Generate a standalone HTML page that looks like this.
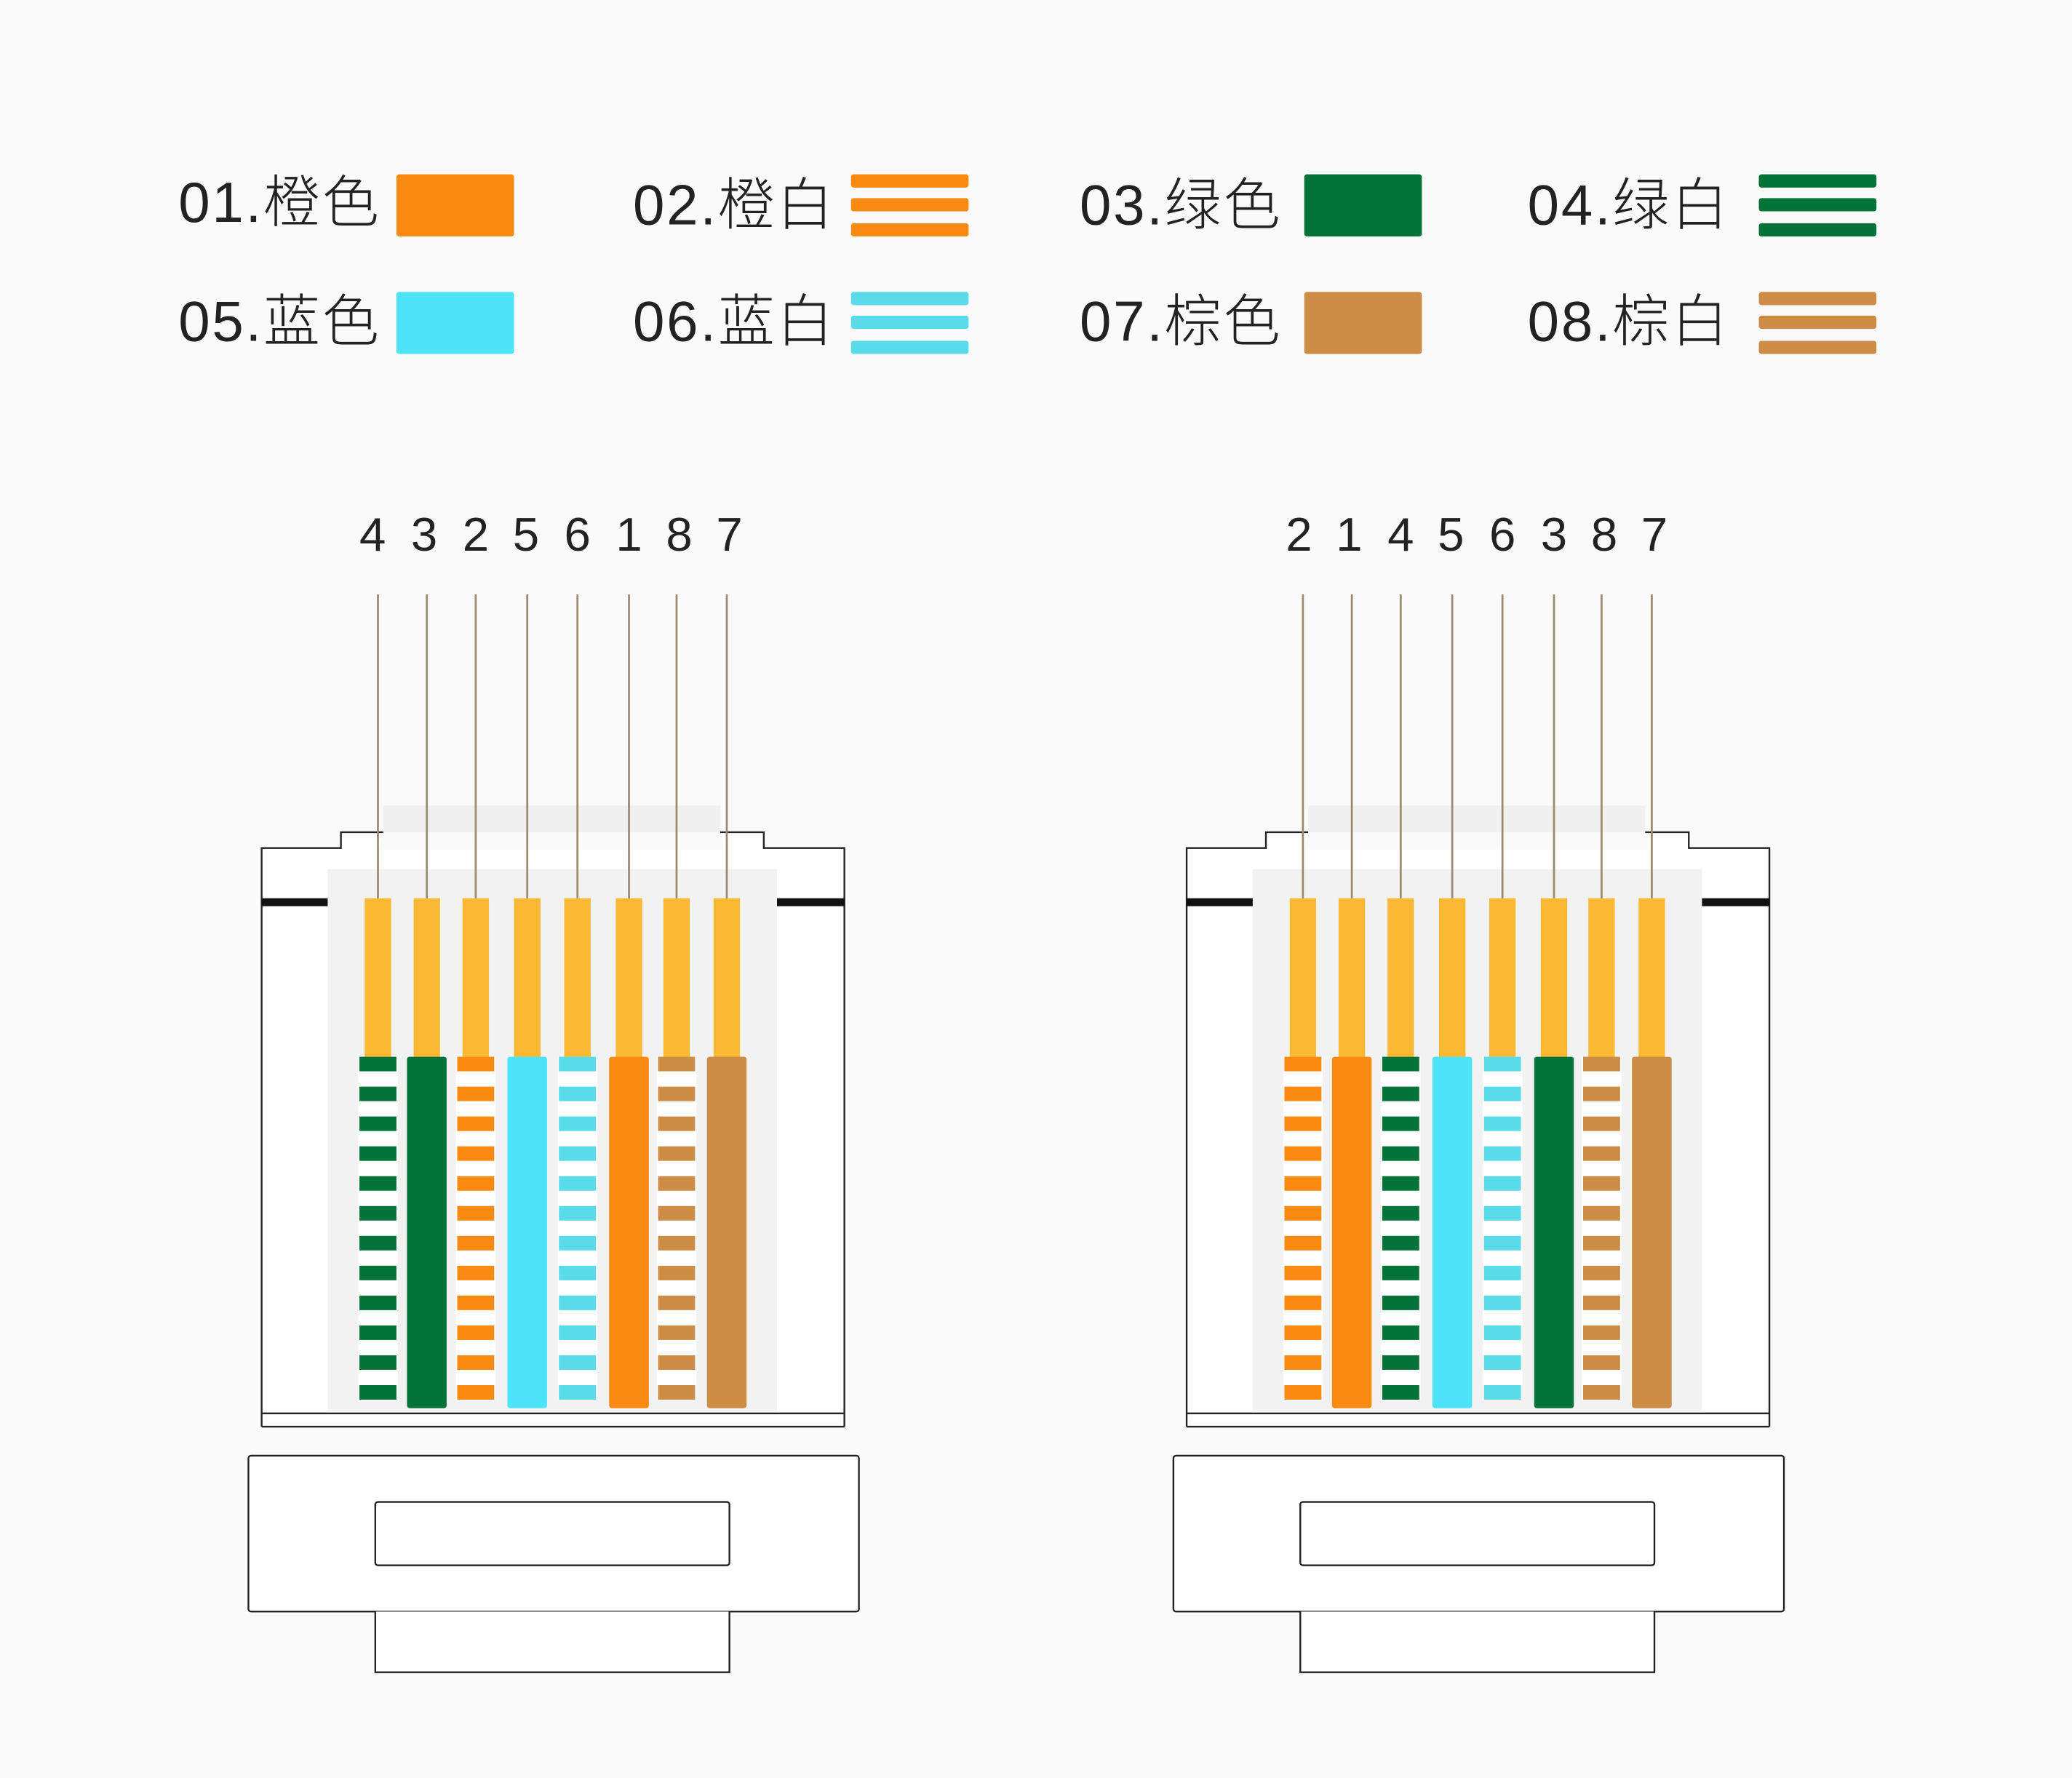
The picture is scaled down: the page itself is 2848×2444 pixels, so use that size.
<!DOCTYPE html>
<html><head><meta charset="utf-8"><style>
html,body{margin:0;padding:0;background:#fafafa;}
svg{display:block;}
.t{font-family:"Liberation Sans","Noto Sans CJK SC",sans-serif;fill:#222;font-weight:300;}
</style></head><body>
<svg id="s" width="2848" height="2444" viewBox="0 0 1568 1346" preserveAspectRatio="none" xmlns="http://www.w3.org/2000/svg">
<rect width="1568" height="1346" fill="#fafafa"/>
<g class="t" font-size="43" letter-spacing="1.5">
<text x="135" y="168">01.橙色</text>
<text x="479" y="170">02.橙白</text>
<text x="817" y="170">03.绿色</text>
<text x="1156" y="170">04.绿白</text>
<text x="135" y="258">05.蓝色</text>
<text x="479" y="258">06.蓝白</text>
<text x="817" y="258">07.棕色</text>
<text x="1156" y="258">08.棕白</text>
</g>
<g class="t" font-size="36" text-anchor="middle">
<text x="282" y="417">4</text><text x="321" y="417">3</text><text x="360" y="417">2</text><text x="398" y="417">5</text><text x="437" y="417">6</text><text x="476" y="417">1</text><text x="514" y="417">8</text><text x="552" y="417">7</text>
<text x="983" y="417">2</text><text x="1021" y="417">1</text><text x="1060" y="417">4</text><text x="1098" y="417">5</text><text x="1137" y="417">6</text><text x="1176" y="417">3</text><text x="1214" y="417">8</text><text x="1252" y="417">7</text>
</g>
<g id="g"></g>
</svg>
<script>
var C={o:"#fb8a12",g:"#047337",b:"#4de3f8",bs:"#5adbea",n:"#cd8d45"};
var h="";
function r(x,y,w,hh,f,extra){h+='<rect x="'+x+'" y="'+y+'" width="'+w+'" height="'+hh+'" fill="'+f+'" '+(extra||'')+'/>';}
function solid(x,y,c){r(x,y,89,47,c,'rx="2"');}
function stripe(x,y,c){r(x,y,89,10,c,'rx="2"');r(x,y+18,89,10,c,'rx="2"');r(x,y+37,89,10,c,'rx="2"');}
solid(300,132,C.o);stripe(644,132,C.o);solid(987,132,C.g);stripe(1331,132,C.g);
solid(300,221,C.b);stripe(644,221,C.bs);solid(987,221,C.n);stripe(1331,221,C.n);
function conn(dx,xs,wires){
 r(290+dx,610,255,20,"#f0f0f0");
 h+='<path d="M'+(198+dx)+' 1080 V642 H'+(258+dx)+' V630 H'+(290+dx)+' M'+(545+dx)+' 630 H'+(578+dx)+' V642 H'+(639+dx)+' V1080" fill="#fff" stroke="#222" stroke-width="1.3"/>';
 r(199+dx,643,439,437,"#fff");
 r(248+dx,658,340,410,"#f2f2f2");
 r(198+dx,680,50,6,"#111");r(588+dx,680,51,6,"#111");
 for(var i=0;i<8;i++){var x=xs[i]+dx,w=wires[i];
  h+='<line x1="'+x+'" y1="450" x2="'+x+'" y2="682" stroke="#9a8a70" stroke-width="1.5"/>';
  r(x-10,680,20,122,"#fbb933");
  if(w[1]){r(x-15,800,30,260,"#fff");for(var k=0;k<12;k++)r(x-14,800+k*22.6,28,11,C[w[0]]);}
  else r(x-15,800,30,266,C[w[0]],'rx="2"');
 }
 h+='<path d="M'+(198+dx)+' 1070 H'+(639+dx)+' M'+(198+dx)+' 1080 H'+(639+dx)+'" stroke="#222" stroke-width="1.3"/>';
 h+='<rect x="'+(188+dx)+'" y="1102" width="462" height="118" rx="2" fill="#fff" stroke="#222" stroke-width="1.3"/>';
 h+='<rect x="'+(284+dx)+'" y="1137" width="268" height="48" rx="2" fill="#fff" stroke="#222" stroke-width="1.3"/>';
 h+='<path d="M'+(284+dx)+' 1220 V1266 H'+(552+dx)+' V1220" fill="#fff" stroke="#222" stroke-width="1.3"/>';
}
var xs=[286,323,360,399,437,476,512,550];
conn(0,xs,[["g",1],["g",0],["o",1],["b",0],["bs",1],["o",0],["n",1],["n",0]]);
conn(700,xs,[["o",1],["o",0],["g",1],["b",0],["bs",1],["g",0],["n",1],["n",0]]);
document.getElementById("g").innerHTML=h;
</script>
</body></html>
